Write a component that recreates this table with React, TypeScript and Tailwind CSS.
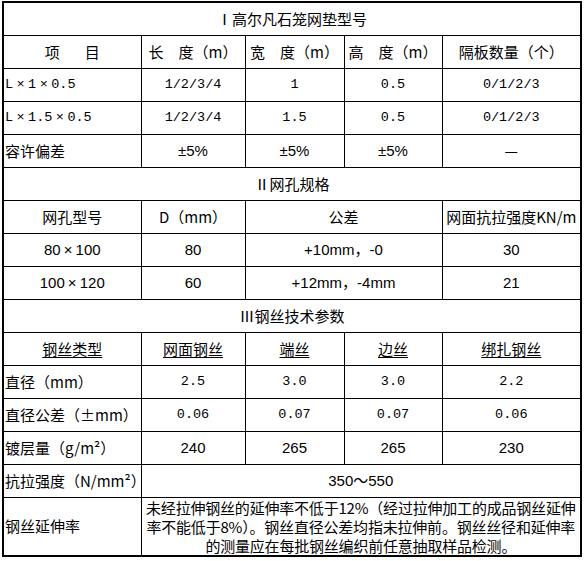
import { ReactNode } from "react";

const mono = "font-['Liberation_Mono','Noto_Sans_CJK_SC',monospace] text-[13.5px]";
const sans = "font-['Liberation_Sans','Noto_Sans_CJK_SC',sans-serif]";

function Td({
  children,
  left,
  span,
  className = "",
}: {
  children?: ReactNode;
  left?: boolean;
  span?: number;
  className?: string;
}) {
  return (
    <td
      colSpan={span}
      className={`border border-black p-0 align-middle whitespace-nowrap ${left ? "text-left pl-[1px]" : "text-center"} ${className}`}
    >
      {children}
    </td>
  );
}

function Title({ children }: { children: ReactNode }) {
  return (
    <tr className="h-[33px]">
      <Td span={5}>{children}</Td>
    </tr>
  );
}

// full-width multiplication sign, as in the source sheet
function X() {
  return <span className="inline-block w-[15px] text-center">×</span>;
}

export default function App() {
  return (
    <div className="min-h-screen bg-white pl-[2px] pt-[1px] text-black font-['Noto_Sans_CJK_SC',sans-serif] text-[15px] leading-[18px]">
      <table className="table-fixed border-collapse border-2 border-black w-[580px]">
        <colgroup>
          <col className="w-[138px]" />
          <col className="w-[104px]" />
          <col className="w-[99px]" />
          <col className="w-[98px]" />
          <col className="w-[139px]" />
        </colgroup>
        <tbody>
          {/* I */}
          <Title>Ⅰ高尔凡石笼网垫型号</Title>
          <tr className="h-[33px]">
            <Td>
              <span className="mr-[25px]">项</span>目
            </Td>
            <Td>长　度（m）</Td>
            <Td>宽　度（m）</Td>
            <Td>高　度（m）</Td>
            <Td>隔板数量（个）</Td>
          </tr>
          <tr className="h-[33px]">
            <Td left className={mono}>L<X />1<X />0.5</Td>
            <Td className={mono}>1/2/3/4</Td>
            <Td className={mono}>1</Td>
            <Td className={mono}>0.5</Td>
            <Td className={mono}>0/1/2/3</Td>
          </tr>
          <tr className="h-[33px]">
            <Td left className={mono}>L<X />1.5<X />0.5</Td>
            <Td className={mono}>1/2/3/4</Td>
            <Td className={mono}>1.5</Td>
            <Td className={mono}>0.5</Td>
            <Td className={mono}>0/1/2/3</Td>
          </tr>
          <tr className="h-[33px]">
            <Td left>容许偏差</Td>
            <Td className={sans}>±5%</Td>
            <Td className={sans}>±5%</Td>
            <Td className={sans}>±5%</Td>
            <Td>—</Td>
          </tr>

          {/* II */}
          <Title>Ⅱ网孔规格</Title>
          <tr className="h-[33px]">
            <Td>网孔型号</Td>
            <Td>D（mm）</Td>
            <Td span={2}>公差</Td>
            <Td>网面抗拉强度KN/m</Td>
          </tr>
          <tr className="h-[33px]">
            <Td className={sans}>80<X />100</Td>
            <Td className={sans}>80</Td>
            <Td span={2} className={sans}>+10mm，-0</Td>
            <Td className={sans}>30</Td>
          </tr>
          <tr className="h-[33px]">
            <Td className={sans}>100<X />120</Td>
            <Td className={sans}>60</Td>
            <Td span={2} className={sans}>+12mm，-4mm</Td>
            <Td className={sans}>21</Td>
          </tr>

          {/* III */}
          <Title>Ⅲ钢丝技术参数</Title>
          <tr className="h-[33px]">
            <Td><span className="underline underline-offset-2">钢丝类型</span></Td>
            <Td><span className="underline underline-offset-2">网面钢丝</span></Td>
            <Td><span className="underline underline-offset-2">端丝</span></Td>
            <Td><span className="underline underline-offset-2">边丝</span></Td>
            <Td><span className="underline underline-offset-2">绑扎钢丝</span></Td>
          </tr>
          <tr className="h-[33px]">
            <Td left>直径（mm）</Td>
            <Td className={mono}>2.5</Td>
            <Td className={mono}>3.0</Td>
            <Td className={mono}>3.0</Td>
            <Td className={mono}>2.2</Td>
          </tr>
          <tr className="h-[33px]">
            <Td left>直径公差（±mm）</Td>
            <Td className={mono}>0.06</Td>
            <Td className={mono}>0.07</Td>
            <Td className={mono}>0.07</Td>
            <Td className={mono}>0.06</Td>
          </tr>
          <tr className="h-[33px]">
            <Td left>镀层量（g/m²）</Td>
            <Td className={sans}>240</Td>
            <Td className={sans}>265</Td>
            <Td className={sans}>265</Td>
            <Td className={sans}>230</Td>
          </tr>
          <tr className="h-[33px]">
            <Td left>抗拉强度（N/mm²）</Td>
            <Td span={4} className={sans}>350～550</Td>
          </tr>
          <tr className="h-[58px]">
            <Td left>钢丝延伸率</Td>
            <Td span={4} className="tracking-[-0.2px]">
              <div className="leading-[19px]">
                未经拉伸钢丝的延伸率不低于12%（经过拉伸加工的成品钢丝延伸
              </div>
              <div className="leading-[19px]">
                率不能低于8%）。钢丝直径公差均指未拉伸前。钢丝丝径和延伸率
              </div>
              <div className="leading-[19px]">
                的测量应在每批钢丝编织前任意抽取样品检测。
              </div>
            </Td>
          </tr>
        </tbody>
      </table>
    </div>
  );
}
